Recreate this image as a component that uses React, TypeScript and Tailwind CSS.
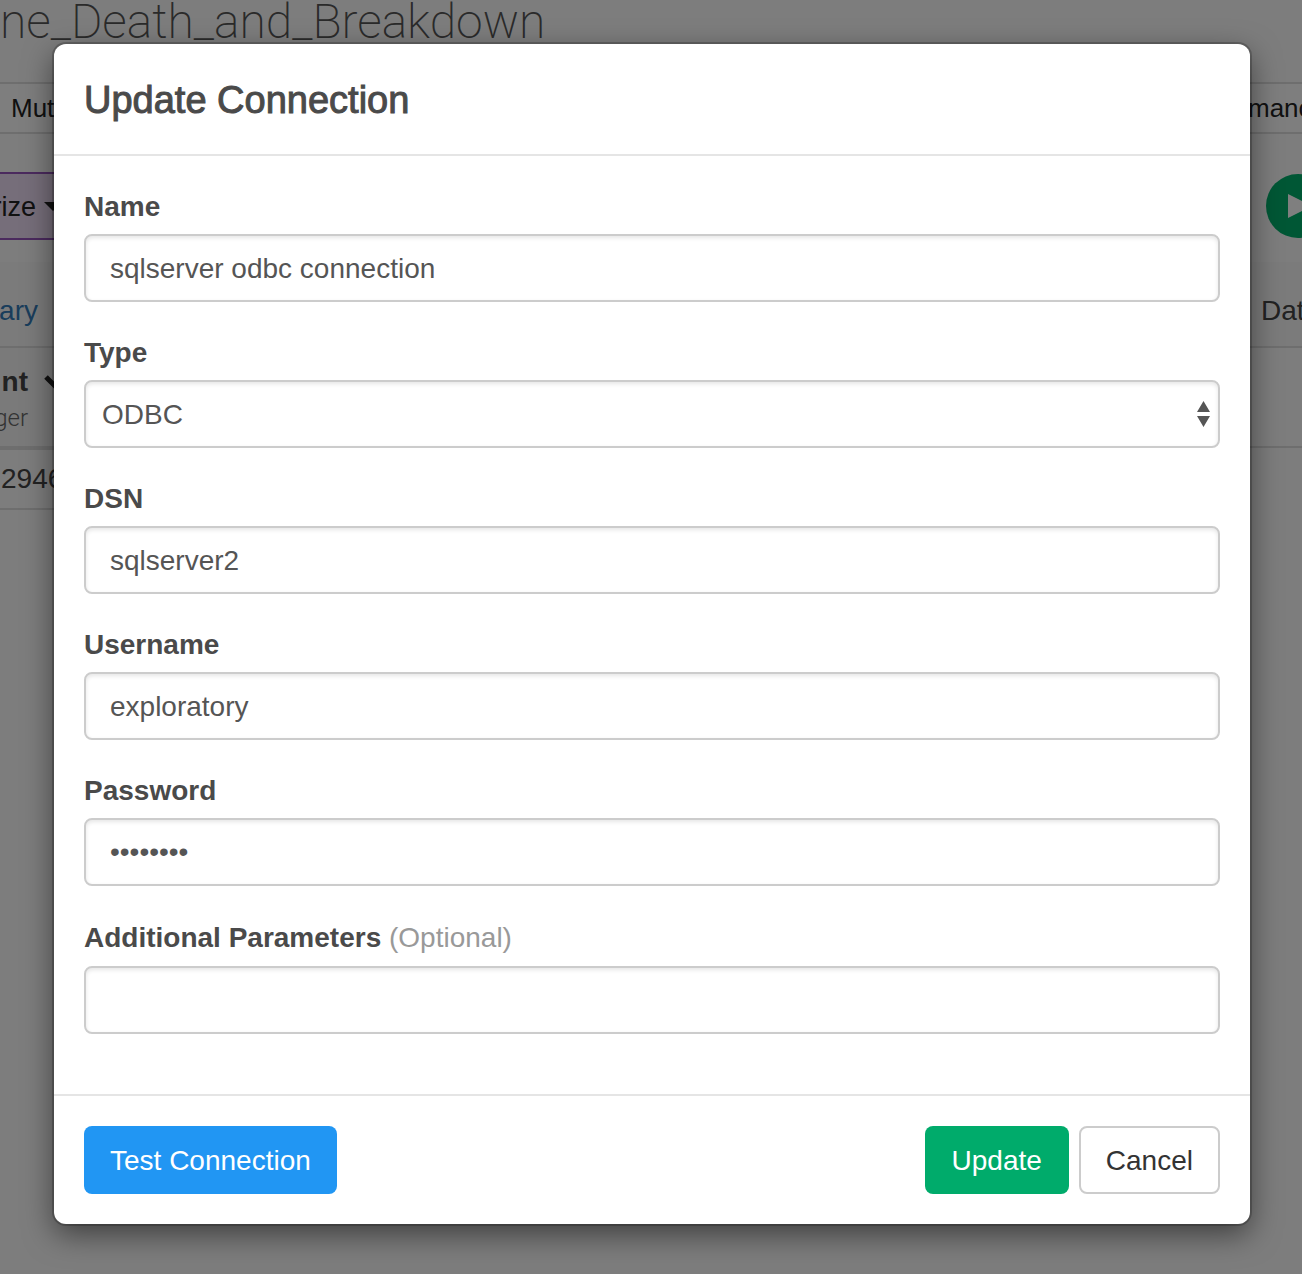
import React from "react";

const fieldClass =
  "block h-[68px] w-full rounded-lg border-2 border-[#ccc] bg-white px-6 text-[28px] text-[#555] shadow-[inset_0_2px_4px_rgba(0,0,0,0.1)] outline-none";

function Field({ id, label, hint, children }: { id: string; label: string; hint?: string; children: React.ReactNode }) {
  return (
    <div className="flex flex-col gap-1.5">
      <label htmlFor={id} className={`text-[28px] font-bold text-[#4a4a4a] ${hint ? "leading-11" : "leading-[42px]"}`}>
        {label}
        {hint && <span className="font-normal text-[#999]"> {hint}</span>}
      </label>
      {children}
    </div>
  );
}

function Backdrop() {
  return (
    <div aria-hidden="true" className="absolute inset-0 flex flex-col overflow-hidden bg-[#fafafa] text-[28px] leading-10 text-[#444]">
      <div className="flex h-[82px] shrink-0 items-start">
        <h1 className="font-[Roboto] text-5xl leading-11 font-extralight whitespace-nowrap text-[#555]">ne_Death_and_Breakdown</h1>
      </div>
      <div className="flex h-[52px] shrink-0 items-center justify-between border-y-2 border-[#ddd] bg-[#fdfdfd] text-[26px] text-[#222]">
        <span className="pl-[11px]">Mut</span>
        <span className="flex w-[54px]">manc</span>
      </div>
      <div className="flex h-[128px] shrink-0 items-center justify-between pt-4">
        <div className="flex h-[68px] w-40 items-center gap-2 border-y-2 border-[#9654bc] bg-[#ecdcf4] pt-0.5 text-[#222]">
          <span className="flex w-9 justify-end text-[27px]">rize</span>
          <svg width="18" height="10" viewBox="0 0 18 10"><path d="M0 0H18L9 9Z" fill="#222" /></svg>
        </div>
        <div className="w-9">
          <div className="flex size-16 items-center rounded-full bg-[#00ae6b] pl-[22px]">
            <svg width="24" height="24" viewBox="0 0 24 24"><path d="M0 0L24 12L0 24Z" fill="#fff" /></svg>
          </div>
        </div>
      </div>
      <div className="flex h-[86px] shrink-0 items-center justify-between border-b-2 border-[#ddd] bg-[#f7f7f7] pt-3.5">
        <span className="flex w-[38px] justify-end text-[#337ab7]">ary</span>
        <span className="w-[41px]">Dat</span>
      </div>
      <div className="flex h-[102px] shrink-0 justify-between">
        <div className="flex w-40 flex-col border-b-4 border-[#ddd] bg-[#f4f4f4] pt-3.5">
          <div className="flex items-center gap-4">
            <span className="flex w-7 justify-end font-bold">nt</span>
            <svg width="20" height="14" viewBox="0 0 20 14"><path d="M2 2L10 10L18 2" fill="none" stroke="#222" strokeWidth="5" /></svg>
          </div>
          <span className="flex w-7 justify-end font-[Roboto] text-2xl font-light text-[#666]">ger</span>
        </div>
        <div className="h-[100px] w-40 border-b-2 border-[#ddd]" />
      </div>
      <div className="flex h-[60px] w-40 shrink-0 items-center border-b-2 border-[#ddd] pl-px">2946</div>
    </div>
  );
}

export default function App() {
  return (
    <main className="relative min-h-screen overflow-hidden font-['Liberation_Sans',sans-serif]">
      <Backdrop />
      <div className="relative min-h-screen bg-black/50 pt-11 pr-[52px] pb-[50px] pl-[54px]">
        <form
          role="dialog"
          aria-labelledby="dialog-title"
          onSubmit={(e) => e.preventDefault()}
          className="rounded-xl bg-white shadow-[0_0_0_2px_rgba(0,0,0,0.2),0_10px_30px_rgba(0,0,0,0.5)]"
        >
          <header className="flex h-28 items-center border-b-2 border-[#e5e5e5] px-[30px] pt-0.5">
            <h2 id="dialog-title" className="text-[38px] font-normal text-[#4a4a4a] [-webkit-text-stroke:1px_#4a4a4a]">Update Connection</h2>
          </header>
          <div className="flex flex-col gap-[30px] px-[30px] pt-[30px] pb-[60px]">
            <Field id="name" label="Name">
              <input id="name" type="text" defaultValue="sqlserver odbc connection" className={`${fieldClass} pt-0.5`} />
            </Field>
            <Field id="type" label="Type">
              <div className="relative">
                <select id="type" defaultValue="ODBC" className={`${fieldClass} appearance-none !px-4 pt-0.5`}>
                  <option>ODBC</option>
                </select>
                <svg className="pointer-events-none absolute top-[21px] right-2.5" width="13" height="26" viewBox="0 0 13 26" fill="#555">
                  <path d="M6.5 0L13 11H0ZM0 15H13L6.5 26Z" />
                </svg>
              </div>
            </Field>
            <Field id="dsn" label="DSN">
              <input id="dsn" type="text" defaultValue="sqlserver2" className={`${fieldClass} pt-0.5`} />
            </Field>
            <Field id="username" label="Username">
              <input id="username" type="text" defaultValue="exploratory" className={`${fieldClass} pt-0.5`} />
            </Field>
            <Field id="password" label="Password">
              <input id="password" type="password" defaultValue="password" className={fieldClass} />
            </Field>
            <Field id="params" label="Additional Parameters" hint="(Optional)">
              <input id="params" type="text" className={`${fieldClass} pt-0.5`} />
            </Field>
          </div>
          <footer className="flex items-center gap-2.5 border-t-2 border-[#e5e5e5] p-[30px] text-[28px]">
            <button type="button" className="mr-auto h-[68px] rounded-lg bg-[#2196f3] px-[26px] pt-0.5 text-white">Test Connection</button>
            <button type="submit" className="h-[68px] rounded-lg bg-[#00ab6b] px-[27px] pt-0.5 text-white">Update</button>
            <button type="button" className="h-[68px] rounded-lg border-2 border-[#ccc] bg-white px-[25px] pt-0.5 text-[#333]">Cancel</button>
          </footer>
        </form>
      </div>
    </main>
  );
}
